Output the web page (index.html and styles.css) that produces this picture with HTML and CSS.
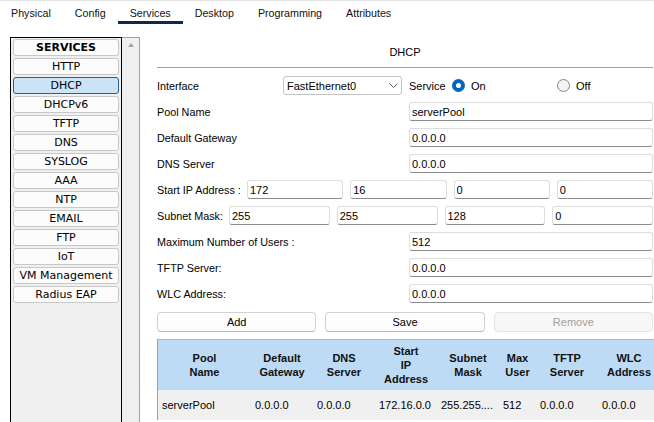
FILE: index.html
```html
<!DOCTYPE html>
<html>
<head>
<meta charset="utf-8">
<link rel="stylesheet" href="styles.css">
</head>
<body>
<div class="tabs">
  <div class="tab first">Physical</div>
  <div class="tab">Config</div>
  <div class="tab active">Services</div>
  <div class="tab">Desktop</div>
  <div class="tab">Programming</div>
  <div class="tab">Attributes</div>
</div>
<div class="content">
  <div class="sidebar">
    <div class="svc-list">
      <div class="svc head">SERVICES</div>
      <div class="svc">HTTP</div>
      <div class="svc sel">DHCP</div>
      <div class="svc">DHCPv6</div>
      <div class="svc">TFTP</div>
      <div class="svc">DNS</div>
      <div class="svc">SYSLOG</div>
      <div class="svc">AAA</div>
      <div class="svc">NTP</div>
      <div class="svc">EMAIL</div>
      <div class="svc">FTP</div>
      <div class="svc">IoT</div>
      <div class="svc">VM Management</div>
      <div class="svc">Radius EAP</div>
    </div>
    <div class="scroll"><div class="arrow"></div></div>
  </div>
  <div class="main">
    <div class="title">DHCP</div>
    <div class="form">
      <div class="row">
        <div class="lbl lbl-if">Interface</div>
        <div class="select"><span>FastEthernet0</span><svg width="9" height="5" viewBox="0 0 9 5"><path d="M0.5 0.5 L4.5 4.5 L8.5 0.5" fill="none" stroke="#5a5a5a" stroke-width="1"/></svg></div>
        <div class="svc-lbl">Service</div>
        <div class="opt"><span class="radio on"></span><span>On</span></div>
        <div class="opt last"><span class="radio"></span><span>Off</span></div>
      </div>
      <div class="row"><div class="lbl">Pool Name</div><input class="field" value="serverPool"></div>
      <div class="row"><div class="lbl">Default Gateway</div><input class="field" value="0.0.0.0"></div>
      <div class="row"><div class="lbl">DNS Server</div><input class="field" value="0.0.0.0"></div>
      <div class="row quad">
        <div class="lbl lbl-start">Start IP Address :</div>
        <input class="field" value="172"><input class="field" value="16"><input class="field" value="0"><input class="field" value="0">
      </div>
      <div class="row quad">
        <div class="lbl lbl-mask">Subnet Mask:</div>
        <input class="field" value="255"><input class="field" value="255"><input class="field" value="128"><input class="field" value="0">
      </div>
      <div class="row"><div class="lbl">Maximum Number of Users :</div><input class="field" value="512"></div>
      <div class="row"><div class="lbl">TFTP Server:</div><input class="field" value="0.0.0.0"></div>
      <div class="row"><div class="lbl">WLC Address:</div><input class="field" value="0.0.0.0"></div>
    </div>
    <div class="actions">
      <div class="btn">Add</div>
      <div class="btn">Save</div>
      <div class="btn disabled">Remove</div>
    </div>
    <div class="table">
      <div class="th">Pool<br>Name</div>
      <div class="th">Default<br>Gateway</div>
      <div class="th">DNS<br>Server</div>
      <div class="th">Start<br>IP<br>Address</div>
      <div class="th">Subnet<br>Mask</div>
      <div class="th">Max<br>User</div>
      <div class="th">TFTP<br>Server</div>
      <div class="th">WLC<br>Address</div>
      <div class="td">serverPool</div>
      <div class="td">0.0.0.0</div>
      <div class="td">0.0.0.0</div>
      <div class="td">172.16.0.0</div>
      <div class="td">255.255....</div>
      <div class="td">512</div>
      <div class="td">0.0.0.0</div>
      <div class="td">0.0.0.0</div>
    </div>
  </div>
</div>
</body>
</html>
```
FILE: styles.css
```css
html, body {
  margin: 0;
  padding: 0;
}
body {
  width: 654px;
  height: 422px;
  overflow: hidden;
  background: #ffffff;
  font-family: "Liberation Sans", Arial, sans-serif;
  font-size: 11px;
  color: #000;
}
.tabs {
  display: flex;
  border-top: 1px solid #e4e4e4;
}
.tab {
  padding: 5px 12px 1px;
  line-height: 14px;
  font-size: 10.7px;
  border-bottom: 3px solid transparent;
  color: #111;
}
.tab.first {
  padding-left: 11px;
}
.tab.active {
  border-bottom-color: #0f2a49;
}
.content {
  display: flex;
  margin-top: 13px;
  padding-left: 10px;
}
.sidebar {
  display: flex;
  flex: none;
  height: 420px;
}
.svc-list {
  width: 112px;
  box-sizing: border-box;
  border: 1px solid #000;
  background: #f0f0f0;
  padding: 1px 2px;
  display: flex;
  flex-direction: column;
  gap: 2px;
}
.svc {
  height: 17px;
  box-sizing: border-box;
  border: 1px solid #c8c8c8;
  border-radius: 3px;
  background: #fcfcfc;
  text-align: center;
  font-family: "DejaVu Sans", Verdana, sans-serif;
  font-size: 11px;
  line-height: 16px;
  color: #000;
  white-space: nowrap;
}
.svc.head {
  font-weight: bold;
}
.svc.sel {
  background: #cce4f7;
  border-color: #2c5f8d;
}
.scroll {
  width: 18px;
  box-sizing: border-box;
  border-top: 1px solid #a0a0a0;
  border-right: 1px solid #a0a0a0;
  background: #f0f0f0;
}
.arrow {
  width: 0;
  height: 0;
  margin: 5px auto 0;
  border-left: 3.5px solid transparent;
  border-right: 3.5px solid transparent;
  border-bottom: 4px solid #a3a3a3;
}
.main {
  flex: 1;
  min-width: 0;
  padding: 0 1px 0 17px;
  overflow: hidden;
}
.title {
  text-align: center;
  padding: 8px 0;
  line-height: 14px;
  border-bottom: 1px solid #a0a0a0;
}
.form {
  display: flex;
  flex-direction: column;
  gap: 7px;
  margin-top: 8px;
}
.row {
  display: flex;
  align-items: center;
  height: 19px;
}
.lbl {
  width: 252px;
  flex: none;
  white-space: nowrap;
  font-size: 10.8px;
}
.lbl-if {
  width: 126px;
}
.lbl-start {
  width: 90px;
}
.lbl-mask {
  width: 72px;
}
.quad {
  gap: 7px;
}
.quad .lbl {
  margin-right: -7px;
}
.field {
  flex: 1;
  min-width: 0;
  height: 19px;
  box-sizing: border-box;
  border: 1px solid #dddddd;
  border-bottom-color: #8c8c8c;
  border-radius: 3px;
  padding: 0 2px;
  margin: 0;
  font: inherit;
  color: #000;
  background: #fff;
  outline: none;
}
.select {
  flex: none;
  width: 119px;
  height: 19px;
  box-sizing: border-box;
  border: 1px solid #c4c4c4;
  border-radius: 3px;
  padding: 0 3px 0 3px;
  display: flex;
  align-items: center;
  justify-content: space-between;
  background: #fff;
}
.svc-lbl {
  width: 43px;
  margin-left: 7px;
  flex: none;
}
.opt {
  display: flex;
  align-items: center;
  gap: 6px;
  width: 105px;
  flex: none;
}
.opt.last {
  width: auto;
}
.radio {
  width: 13px;
  height: 13px;
  box-sizing: border-box;
  border-radius: 50%;
  border: 1px solid #858585;
  background: #f4f4f4;
  flex: none;
}
.radio.on {
  border: 4px solid #0067c0;
  background: #fff;
}
.actions {
  display: flex;
  gap: 9px;
  margin-top: 9px;
}
.btn {
  flex: 1;
  height: 20px;
  box-sizing: border-box;
  border: 1px solid #d2d2d2;
  border-bottom-color: #b8b8b8;
  border-radius: 4px;
  background: #fdfdfd;
  text-align: center;
  line-height: 18px;
}
.btn.disabled {
  background: #f7f7f7;
  border-color: #e4e4e4;
  color: #a0a0a0;
}
.table {
  margin-top: 7px;
  display: grid;
  grid-template-columns: 93px 62px 62px 62px 62px 37px 62px 62px;
  width: 502px;
  border-left: 1px solid #a0a0a0;
}
.th {
  height: 51px;
  box-sizing: border-box;
  border-top: 1px solid #a8b8c6;
  background: #bddbf4;
  display: flex;
  align-items: center;
  justify-content: center;
  text-align: center;
  font-weight: bold;
  line-height: 14px;
  color: #111;
}
.td {
  height: 30px;
  line-height: 30px;
  background: #f0f0f0;
  padding-left: 4px;
  white-space: nowrap;
  overflow: hidden;
}
```
